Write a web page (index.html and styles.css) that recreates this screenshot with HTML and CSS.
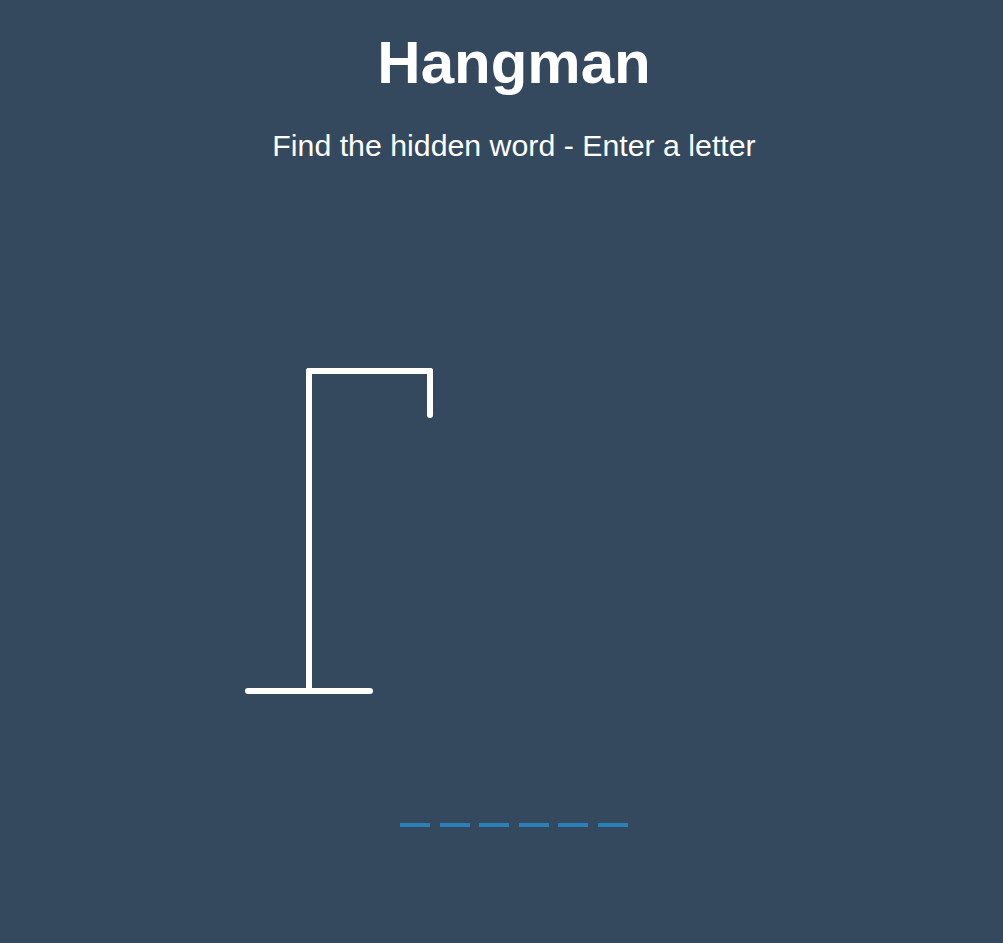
FILE: index.html
```html
<!DOCTYPE html>
<html lang="en">
<head>
<meta charset="UTF-8">
<title>Hangman</title>
<link rel="stylesheet" href="styles.css">
</head>
<body>
  <h1 class="title">Hangman</h1>
  <p class="subtitle">Find the hidden word - Enter a letter</p>
  <div class="game-container">
    <svg class="figure-container" width="300" height="390" viewBox="0 0 300 390">
      <line x1="90" y1="30" x2="211" y2="30" />
      <line x1="211" y1="30" x2="211" y2="74" />
      <line x1="90" y1="30" x2="90" y2="350" />
      <line x1="29" y1="350" x2="151" y2="350" />
    </svg>
    <div class="word">
      <span class="letter"></span>
      <span class="letter"></span>
      <span class="letter"></span>
      <span class="letter"></span>
      <span class="letter"></span>
      <span class="letter"></span>
    </div>
  </div>
</body>
</html>
```
FILE: styles.css
```css
html {
  overflow: hidden;
}

body {
  margin: 0;
  padding-left: 25px;
  height: 943px;
  box-sizing: border-box;
  overflow: hidden;
  background-color: #34495e;
  color: #fff;
  font-family: "Liberation Sans", Arial, Helvetica, sans-serif;
  display: flex;
  flex-direction: column;
  align-items: center;
}

.title {
  margin: 28px 0 0;
  font-size: 60px;
  font-weight: bold;
  line-height: normal;
}

.subtitle {
  margin: 32px 0 0;
  font-size: 30.3px;
  line-height: normal;
}

.game-container {
  width: 676px;
  margin-top: 178px;
  display: flex;
  flex-direction: column;
}

.figure-container {
  display: block;
  margin-left: 43px;
  fill: transparent;
  stroke: #fff;
  stroke-width: 6px;
  stroke-linecap: round;
}

.word {
  display: flex;
  justify-content: center;
  margin-top: 21px;
}

.letter {
  display: inline-flex;
  box-sizing: border-box;
  width: 30px;
  height: 75px;
  margin: 0 4.75px;
  border-bottom: 4px solid #2980b9;
}
```
